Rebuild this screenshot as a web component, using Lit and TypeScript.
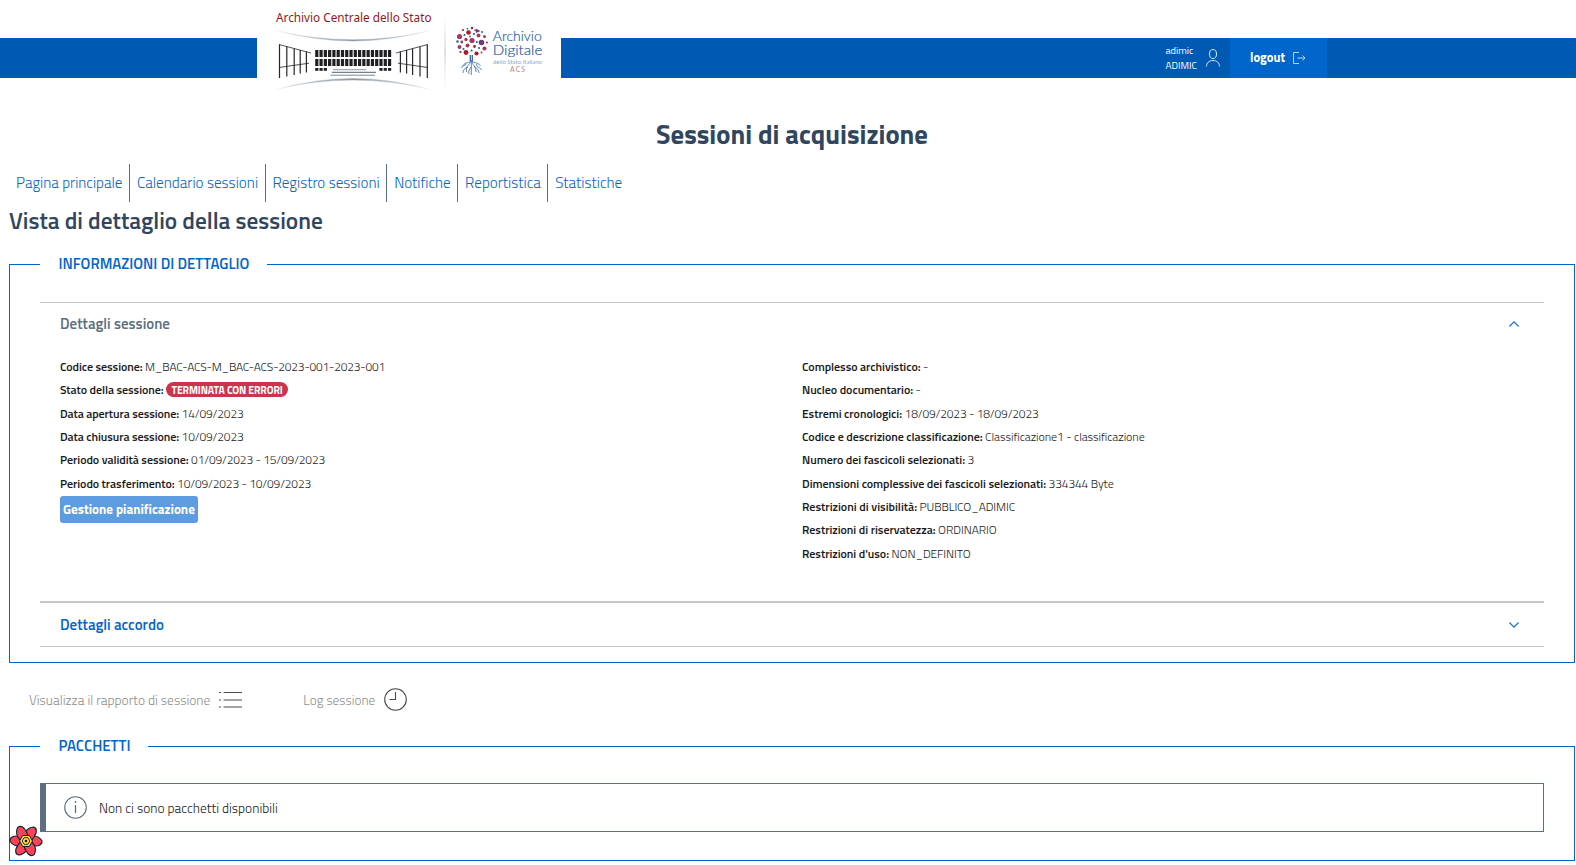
import { LitElement, html, svg, css } from "lit";
import { customElement, property } from "lit/decorators.js";

/** Inline run of text fitted to a given width, by tracking or by font size. */
@customElement("fit-text")
class FitText extends LitElement {
  @property({ type: Number }) w = 0;
  @property({ type: Boolean }) track = false;
  static styles = css`
    :host { display: inline-block; white-space: nowrap; }
  `;
  firstUpdated() {
    const n = (this.textContent || "").trim().length;
    if (!this.w || n < 2) return;
    const natural = this.getBoundingClientRect().width;
    if (this.track) {
      this.style.letterSpacing = `${(this.w - natural) / n}px`;
    } else {
      const size = parseFloat(getComputedStyle(this).fontSize);
      this.style.fontSize = `${(size * this.w) / natural}px`;
    }
  }
  render() {
    return html`<slot></slot>`;
  }
}

@customElement("brand-logos")
class BrandLogos extends LitElement {
  static styles = css`
    :host { display: block; width: 304px; height: 100px; }
    svg { display: block; }
    .acs { font: 13.2px "Noto Sans", sans-serif; fill: #8e1a1d; }
    .digi { font: 300 13.5px Lato, sans-serif; fill: #2a5fa5; stroke: #2a5fa5; stroke-width: 0.2; }
    .sub { font: 5.6px Lato, sans-serif; fill: #8fa9ce; }
    .red { font: 6.8px Lato, sans-serif; fill: #cb7f87; }
  `;
  render() {
    const cols = Array.from({ length: 18 }, (_, i) => 315.2 + i * 4.28);
    const posts: [number, number, number][] = [
      [279.5, 44.5, 78], [286.8, 46.5, 76.5], [294.2, 48.5, 75], [300.2, 50, 73.5], [306.4, 51.5, 72.5],
    ];
    const dots: [number, number, number, string][] = [
      [468.5, 32.5, 2.3, "r"], [463, 30, 1.1, "r"], [472, 28, 1.2, "r"], [482, 32, 1, "b"], [459.5, 36.5, 2.6, "m"],
      [464.5, 35, 1.1, "b"], [474, 34, 1.1, "b"], [478.5, 35.5, 1.9, "m"], [484.5, 36.5, 1.5, "m"], [472, 40.5, 2.6, "m"],
      [466, 39.5, 1.7, "m"], [457.5, 41.5, 1.3, "b"], [461.8, 42, 1.4, "m"], [481.5, 42.5, 2.8, "p"], [487, 42.5, 1.1, "m"],
      [476.8, 42, 1.1, "b"], [467.5, 45.5, 2, "m"], [474.5, 46.5, 1.4, "r"], [459.5, 47, 2, "m"], [463.5, 49, 1.1, "b"],
      [484.5, 48.5, 2.1, "m"], [479, 48, 1.1, "b"], [466, 52.5, 2.4, "r"], [476.5, 53.5, 2.1, "r"], [471.5, 50.5, 1.1, "b"],
      [460.5, 52, 1.1, "r"], [481.5, 52.5, 1, "m"], [470, 36.5, 0.9, "b"], [467.5, 28.8, 0.9, "b"], [475, 30.3, 0.9, "m"],
    ];
    const tone: Record<string, string> = { r: "#a81c26", b: "#2a62ad", m: "#a33a5c", p: "#6d3a7c" };
    return html`
      <svg width="304" height="100" viewBox="257 0 304 100">
        <defs>
          <linearGradient id="edge"><stop offset="0" stop-color="#8a97a3" stop-opacity="0.1" /><stop offset="0.5" stop-color="#8a97a3" /><stop offset="1" stop-color="#8a97a3" stop-opacity="0.1" /></linearGradient>
          <linearGradient id="rule" x2="0" y2="1"><stop offset="0" stop-color="#ccc" stop-opacity="0" /><stop offset="0.5" stop-color="#c4c4c4" /><stop offset="1" stop-color="#ccc" stop-opacity="0" /></linearGradient>
        </defs>
        <text class="acs" x="276" y="22.3" textLength="155.5" lengthAdjust="spacingAndGlyphs">Archivio Centrale dello Stato</text>
        <path d="M276 30.5Q353 49 430 30.5Q353 51.5 276 30.5ZM276 89.5Q353 67.500 430 89.500Q353 70.500 276 89.500Z" fill="url(#edge)" stroke="url(#edge)" stroke-width=".4" />
        <g stroke="#26262b" fill="none">
          ${posts.map(([x, a, b]) => svg`<path d="M${x} ${a}V${b}M${706.8 - x} ${a}V${b}" stroke-width="1.2" />`)}
          <path d="M279 44.500L311 53M427.800 44.500L396 53M279 67.500L309 63.200M427.800 67.500L398 63.200" stroke-width=".8" />
        </g>
        <g fill="#211f24">
          ${cols.map((x) => svg`<path d="M${x} 50h3.200v7h-3.200zM${x} 59h3.200v7h-3.200z" />`)}
          ${[0, 1, 2, 15, 16, 17].map((i) => svg`<path d="M${cols[i]} 68h3.200v2.800h-3.200z" />`)}
        </g>
        <path d="M333 69.700H366" stroke="#8b98a1" /><path d="M332 72.300H376" stroke="#526069" /><path d="M330.500 75.200H375" stroke="#7b8991" />
        <rect x="444.500" y="14" width="1" height="75" fill="url(#rule)" />
        ${dots.map(([x, y, r, c]) => svg`<circle cx=${x} cy=${y} r=${r} fill=${tone[c]} />`)}
        <path d="M475.500 28.500l5 2.500-4.500 2z" fill="#6d3a7c" />
        <g fill="none" stroke="#3566a8" stroke-width=".8">
          <path d="M470.300 55v6M472.300 55v6" stroke-width="1.300" />
          <path d="M471 60c-1 4-6 1-8 6M471.500 60c1 4 6 1 9 6M470.500 61c0 4-5 4-4 11M472 61c0 4 4 5 4 11M471.300 61v14M466.500 64c-2 2-4 1-5 4M476.500 64c0 4 4 3 5 6M468 67c-3 1-5 3-5 6M474 66c2 2 5 3 5 7M471 67c-1 2-3 4-2 7" />
        </g>
        <text class="digi" x="492.800" y="40.500" textLength="49" lengthAdjust="spacingAndGlyphs">Archivio</text>
        <text class="digi" x="492.800" y="54.500" textLength="49.500" lengthAdjust="spacingAndGlyphs">Digitale</text>
        <text class="sub" x="493" y="64" textLength="49" lengthAdjust="spacingAndGlyphs">dello Stato Italiano</text>
        <text class="red" x="510" y="72" textLength="15" lengthAdjust="spacing">ACS</text>
      </svg>
    `;
  }
}

type Row = { label: string; lw: number; value: string; vw: number; badge?: boolean };

const LEFT: Row[] = [
  { label: "Codice sessione:", lw: 82.5, value: "M_BAC-ACS-M_BAC-ACS-2023-001-2023-001", vw: 240 },
  { label: "Stato della sessione:", lw: 103.5, value: "TERMINATA CON ERRORI", vw: 111, badge: true },
  { label: "Data apertura sessione:", lw: 119, value: "14/09/2023", vw: 62 },
  { label: "Data chiusura sessione:", lw: 119, value: "10/09/2023", vw: 62 },
  { label: "Periodo validità sessione:", lw: 128.5, value: "01/09/2023 - 15/09/2023", vw: 134 },
  { label: "Periodo trasferimento:", lw: 114.5, value: "10/09/2023 - 10/09/2023", vw: 134 },
];

const RIGHT: Row[] = [
  { label: "Complesso archivistico:", lw: 118.5, value: "-", vw: 0 },
  { label: "Nucleo documentario:", lw: 111, value: "-", vw: 0 },
  { label: "Estremi cronologici:", lw: 100, value: "18/09/2023 - 18/09/2023", vw: 134 },
  { label: "Codice e descrizione classificazione:", lw: 180.5, value: "Classificazione1 - classificazione", vw: 159.5 },
  { label: "Numero dei fascicoli selezionati:", lw: 163, value: "3", vw: 0 },
  { label: "Dimensioni complessive dei fascicoli selezionati:", lw: 244, value: "334344 Byte", vw: 65 },
  { label: "Restrizioni di visibilità:", lw: 115, value: "PUBBLICO_ADIMIC", vw: 95.5 },
  { label: "Restrizioni di riservatezza:", lw: 133.5, value: "ORDINARIO", vw: 58.5 },
  { label: "Restrizioni d'uso:", lw: 87, value: "NON_DEFINITO", vw: 79 },
];

const NAV: [string, number][] = [
  ["Pagina principale", 106.5], ["Calendario sessioni", 121.2], ["Registro sessioni", 107.2],
  ["Notifiche", 56.5], ["Reportistica", 75.7], ["Statistiche", 67],
];

@customElement("app-root")
class AppRoot extends LitElement {
  static styles = css`
    :host { display: block; height: 865px; overflow: hidden; position: relative; background: #fff; color: #19191a; font-family: "Titillium Web", Roboto, sans-serif; font-size: 12px; }
    * { box-sizing: border-box; }
    svg { display: block; flex: none; }
    header { display: flex; height: 100px; }
    .bar { background: #005ab3; height: 40px; margin-top: 38px; width: 257px; display: flex; justify-content: flex-end; }
    .bar.wide { flex: 1; padding-right: 249px; }
    .user { display: flex; align-items: center; gap: 9px; color: #fff; font-size: 10.5px; line-height: 15px; padding-right: 10px; }
    .names { display: flex; flex-direction: column; align-items: flex-start; width: 31.5px; font-weight: 400; }
    .logout { width: 97px; background: #06c; color: #fff; display: flex; align-items: center; gap: 8px; padding-left: 20px; font-size: 13.5px; font-weight: 700; }
    .logout fit-text { margin-top: -1px; }
    h1 { margin: 14px 0 0 8px; text-align: center; font-size: 27px; line-height: 40px; height: 40px; font-weight: 700; color: #30465f; }
    nav { display: flex; margin: 10px 0 0 9px; height: 38px; color: #06c; font-size: 15px; font-weight: 300; line-height: 38px; }
    .link { padding: 0 6.5px 0 7px; border-right: 1px solid #5c6f82; }
    .link:last-child { border: 0; }
    h2 { margin: 4px 0 0 9px; font-size: 22px; line-height: 30px; height: 30px; font-weight: 600; color: #30465f; }
    fieldset { border: 1px solid #06c; margin: 18px 1px 0 9px; padding: 0 30px 15px; min-width: 0; }
    fieldset.packets { margin-top: 0; padding-bottom: 28px; }
    legend { padding: 0 17.5px 0 18.5px; font-size: 15px; line-height: 20px; height: 20px; font-weight: 600; color: #06c; }
    .packets legend fit-text { margin-top: -1px; }
    .accordion { margin-top: 28px; border-top: 1px solid #c5c7c9; border-bottom: 1px solid #c5c7c9; }
    .head { display: flex; align-items: center; justify-content: space-between; height: 42px; padding: 0 25px 0 20px; font-size: 15px; font-weight: 600; color: #06c; }
    .head.open { color: #5c6f82; }
    .open fit-text { margin-top: -2px; }
    .second { height: 45px; border-top: 2px solid #c5c7c9; }
    .body { height: 256px; padding: 9.6px 20px 0; display: grid; grid-template-columns: 742px 1fr; }
    .row { display: flex; align-items: center; gap: 2.6px; height: 23.375px; line-height: 23px; }
    .label { font-weight: 600; }
    .value { font-weight: 300; }
    .badge { background: #cc334d; color: #fff; font-weight: 700; font-size: 10.5px; line-height: 16px; height: 15px; padding: 0 5.5px; border-radius: 8px; }
    .button { border: 0; display: block; width: 138px; height: 27px; margin-top: 1.4px; padding: 0 3px; border-radius: 3px; background: #5c9ce0; color: #fff; font: 700 13.5px/27px "Titillium Web", Roboto, sans-serif; text-align: left; }
    .links { display: flex; align-items: center; height: 73px; padding-left: 29px; font-size: 13px; font-weight: 300; color: #8e8e8e; }
    .links .item { display: flex; align-items: center; gap: 9px; margin-right: 61px; }
    .links fit-text { padding-top: 1px; }
    .alert { margin-top: 27px; height: 49px; border: 1px solid #5c6f82; border-left-width: 6px; display: flex; align-items: center; padding-left: 18px; gap: 12px; font-size: 13px; font-weight: 300; }
    .flower { position: absolute; left: 9px; top: 825px; }
  `;

  private rows(rows: Row[]) {
    return rows.map((r) => html`
      <div class="row">
        <fit-text track class="label" .w=${r.lw}>${r.label}</fit-text>
        ${r.badge
          ? html`<span class="badge"><fit-text track .w=${r.vw}>${r.value}</fit-text></span>`
          : html`<fit-text track class="value" .w=${r.vw}>${r.value}</fit-text>`}
      </div>`);
  }

  render() {
    return html`
      <header>
        <div class="bar"></div>
        <brand-logos></brand-logos>
        <div class="bar wide">
          <div class="user">
            <div class="names"><fit-text .w=${28}>adimic</fit-text><fit-text .w=${31.5}>ADIMIC</fit-text></div>
            <svg width="14" height="18" viewBox="0 0 14 18" fill="none" stroke="#d9e6f5" stroke-width="1"><ellipse cx="7" cy="5" rx="3.500" ry="4.500" /><path d="M.5 17.500c0-3.500 2.500-6 6.500-6s6.500 2.500 6.500 6" /></svg>
          </div>
          <div class="logout">
            <fit-text .w=${35}>logout</fit-text>
            <svg width="13" height="12" viewBox="0 0 13 12" fill="none" stroke="#b9d4f0"><path d="M6 .5H.5v11H6M4.500 6h7.500M9.500 3.500L12 6l-2.500 2.500" /></svg>
          </div>
        </div>
      </header>

      <h1><fit-text .w=${272}>Sessioni di acquisizione</fit-text></h1>
      <nav>${NAV.map(([t, w]) => html`<span class="link"><fit-text .w=${w}>${t}</fit-text></span>`)}</nav>
      <h2><fit-text .w=${314}>Vista di dettaglio della sessione</fit-text></h2>

      <fieldset>
        <legend><fit-text .w=${191}>INFORMAZIONI DI DETTAGLIO</fit-text></legend>
        <div class="accordion">
          <div class="head open">
            <fit-text .w=${110}>Dettagli sessione</fit-text>
            <svg width="10" height="6" viewBox="0 0 10 6" fill="none" stroke="#1a75d1" stroke-width="1.300"><path d="M.4 5.500L5 .9l4.600 4.600" /></svg>
          </div>
          <div class="body">
            <div>
              ${this.rows(LEFT)}
              <button class="button"><fit-text .w=${132}>Gestione pianificazione</fit-text></button>
            </div>
            <div>${this.rows(RIGHT)}</div>
          </div>
          <div class="head second">
            <fit-text .w=${104}>Dettagli accordo</fit-text>
            <svg width="10" height="6" viewBox="0 0 10 6" fill="none" stroke="#1a75d1" stroke-width="1.300"><path d="M.4 .5L5 5.100 9.600 .5" /></svg>
          </div>
        </div>
      </fieldset>

      <div class="links">
        <div class="item">
          <fit-text .w=${181.5}>Visualizza il rapporto di sessione</fit-text>
          <svg width="23" height="17" viewBox="0 0 23 17" stroke="#4a4a4a" stroke-width="1.200"><path d="M4.500 1.500H23M4.500 9H23M4.500 16H23M0 1.500h2M0 9h2M0 16h2" /></svg>
        </div>
        <div class="item">
          <fit-text .w=${72}>Log sessione</fit-text>
          <svg width="23" height="23" viewBox="0 0 23 23" fill="none" stroke="#4a4a4a" stroke-width="1.100"><circle cx="11.500" cy="11.500" r="10.800" /><path d="M11.500 4v7.500h-6" /></svg>
        </div>
      </div>

      <fieldset class="packets">
        <legend><fit-text .w=${72}>PACCHETTI</fit-text></legend>
        <div class="alert">
          <svg width="23" height="23" viewBox="0 0 23 23" fill="none" stroke="#5c6f82" stroke-width="1.100"><circle cx="11.500" cy="11.500" r="10.800" /><path d="M11.500 9v8M11.500 5v2" stroke-width="1.300" /></svg>
          <fit-text .w=${179}>Non ci sono pacchetti disponibili</fit-text>
        </div>
      </fieldset>

      <svg class="flower" width="34" height="32" viewBox="-17 -16 34 32">
        ${[90, 270, 30, 210, 150, 330].map((a) => svg`
          <path transform="rotate(${a})" fill="#ff4154" stroke="#00233a" stroke-width="1.100" d="M-4.300-3L-5.200-8C-4.500-12-2.500-14.500-.5-15.800C2-16.500 4-14.500 4.700-12C5.200-9 5-6 4.300-3Z" />`)}
        <path d="M-6.500 0L-3.300-5.500H3.300L6.500 0 3.300 5.500H-3.300Z" fill="#ffd94c" stroke="#00233a" />
        <path d="M-3.800 0L-1.900-3.300H1.900L3.800 0 1.900 3.300H-1.900Z" fill="#ffd94c" stroke="#00233a" stroke-width=".9" />
        <circle r="1.300" fill="#00233a" />
      </svg>
    `;
  }
}
